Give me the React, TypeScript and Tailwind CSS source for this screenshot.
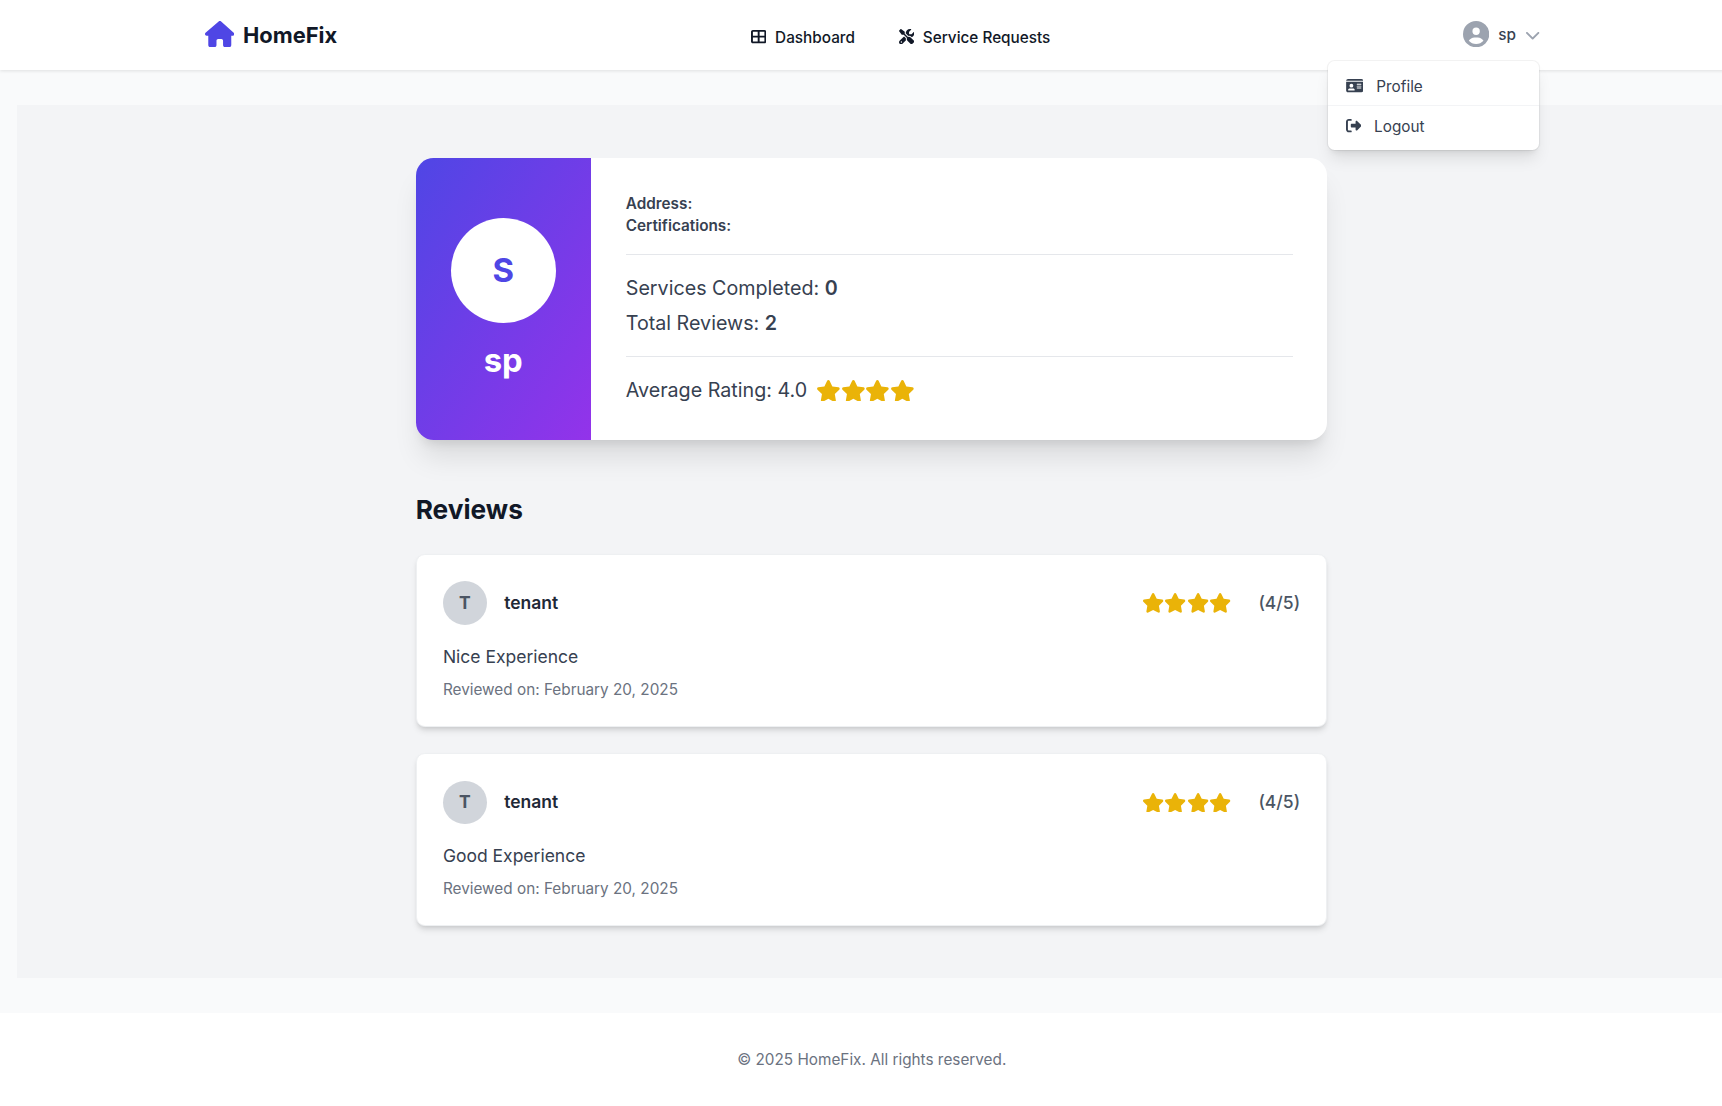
import { FaHouse, FaTableCellsLarge, FaScrewdriverWrench, FaIdCard, FaRightFromBracket, FaStar, FaCircleUser, FaChevronDown } from "react-icons/fa6";

const reviews = [
  { id: 1, author: "tenant", rating: 4, text: "Nice Experience", date: "February 20, 2025" },
  { id: 2, author: "tenant", rating: 4, text: "Good Experience", date: "February 20, 2025" },
];

function Stars({ count }: { count: number }) {
  return (
    <>
      {Array.from({ length: count }, (_, i) => (
        <FaStar key={i} className="h-[1em] w-[1.13em]" />
      ))}
    </>
  );
}

function Header() {
  return (
    <header className="relative z-10 bg-white shadow-[0_1px_3px_0_rgb(0_0_0/0.1)]">
      <div className="mx-auto flex h-16 max-w-[1283px] items-center justify-between px-8">
        <a className="flex items-center gap-2 text-xl font-bold text-[#111827]">
          <FaHouse className="mb-[2px] h-6 w-[27px] text-[#4f46e5]" />
          HomeFix
        </a>
        <nav className="flex items-center gap-10 pt-1 pl-px text-sm font-medium text-[#111827]">
          <a className="flex items-center gap-2">
            <FaTableCellsLarge className="mb-px size-3.5" />
            <span className="pt-px">Dashboard</span>
          </a>
          <a className="flex items-center gap-2">
            <FaScrewdriverWrench className="mb-px size-3.5" />
            <span className="pt-px">Service Requests</span>
          </a>
        </nav>
        <div className="relative flex h-8 items-center justify-end gap-2 text-sm font-medium text-[#374151]">
          <FaCircleUser className="mb-[2px] size-6 text-[#9ca3af]" />
          <span>sp</span>
          <FaChevronDown className="-mr-px h-4 w-3.5 text-[#9ca3af]" />
          <div className="absolute top-full right-0 mt-2 w-[192.5px] rounded-md bg-white py-1 text-sm font-normal shadow-lg ring-1 ring-black/5">
            <a className="flex items-center border-b border-[#f3f4f6] px-4 py-2">
              <FaIdCard className="mr-3 h-3.5 w-4" />
              <span className="pt-px -mb-px">Profile</span>
            </a>
            <a className="flex items-center px-4 py-2">
              <FaRightFromBracket className="mr-3 size-3.5" />
              <span className="pt-px -mb-px">Logout</span>
            </a>
          </div>
        </div>
      </div>
    </header>
  );
}

function ProfileCard() {
  return (
    <section className="flex overflow-hidden rounded-2xl bg-white shadow-xl">
      <div className="flex w-40 flex-col items-center justify-center bg-linear-to-br/srgb from-[#4f46e5] to-[#9333ea]">
        <div className="flex size-24 items-center justify-center rounded-full bg-white text-3xl font-bold text-[#4f46e5]">S</div>
        <h1 className="-mb-px mt-[17px] text-3xl font-bold text-white">sp</h1>
      </div>
      <div className="flex-1 py-8 pr-[31.5px] pl-8 text-[#374151]">
        <div className="text-sm font-semibold">
          <p>Address:</p>
          <p>Certifications:</p>
        </div>
        <div className="mt-4 space-y-[3.5px] border-t border-[#e5e7eb] pt-[17px] text-lg">
          <p>Services Completed: <span className="font-semibold">0</span></p>
          <p>Total Reviews: <span className="font-semibold">2</span></p>
        </div>
        <div className="mt-[15.5px] -mb-px flex items-center border-t border-[#e5e7eb] pt-[17px] text-lg">
          <span>Average Rating: 4.0</span>
          <span className="ml-2 flex text-xl text-[#eab308]">
            <Stars count={4} />
          </span>
        </div>
      </div>
    </section>
  );
}

function ReviewCard({ review }: { review: (typeof reviews)[number] }) {
  return (
    <article className="rounded-lg border border-[#eef0f2] bg-white p-6 shadow-md">
      <div className="flex items-center">
        <div className="flex size-10 items-center justify-center rounded-full bg-[#d1d5db] font-bold text-[#4b5563]">T</div>
        <h3 className="ml-4 font-semibold text-[#1f2937]">{review.author}</h3>
        <div className="ml-auto flex text-lg text-[#eab308]">
          <Stars count={review.rating} />
        </div>
        <span className="ml-[25px] font-medium text-[#4b5563]">({review.rating}/5)</span>
      </div>
      <p className="mt-[17px] text-[#374151]">{review.text}</p>
      <p className="-mb-[0.8px] mt-2 text-sm text-[#6b7280]">Reviewed on: {review.date}</p>
    </article>
  );
}

export default function App() {
  return (
    <div className="h-[1106px] w-[1722px] overflow-hidden bg-white font-['Inter',sans-serif]">
      <div className="w-[1593px] [zoom:1.0945]">
        <Header />
        <main className="bg-[#f9fafb] py-8 pr-4 pl-[15.5px]">
          <div className="bg-[#f3f4f6] pt-12 pb-[47px]">
            <div className="mx-auto max-w-[897px] px-8">
              <ProfileCard />
              <h2 className="mt-12 mb-[24.5px] text-2xl font-bold text-[#111827]">Reviews</h2>
              <div className="space-y-6">
                {reviews.map((review) => (
                  <ReviewCard key={review.id} review={review} />
                ))}
              </div>
            </div>
          </div>
        </main>
        <footer className="bg-white pt-[33px] pb-8 text-center text-sm text-[#6b7280]">© 2025 HomeFix. All rights reserved.</footer>
      </div>
    </div>
  );
}
